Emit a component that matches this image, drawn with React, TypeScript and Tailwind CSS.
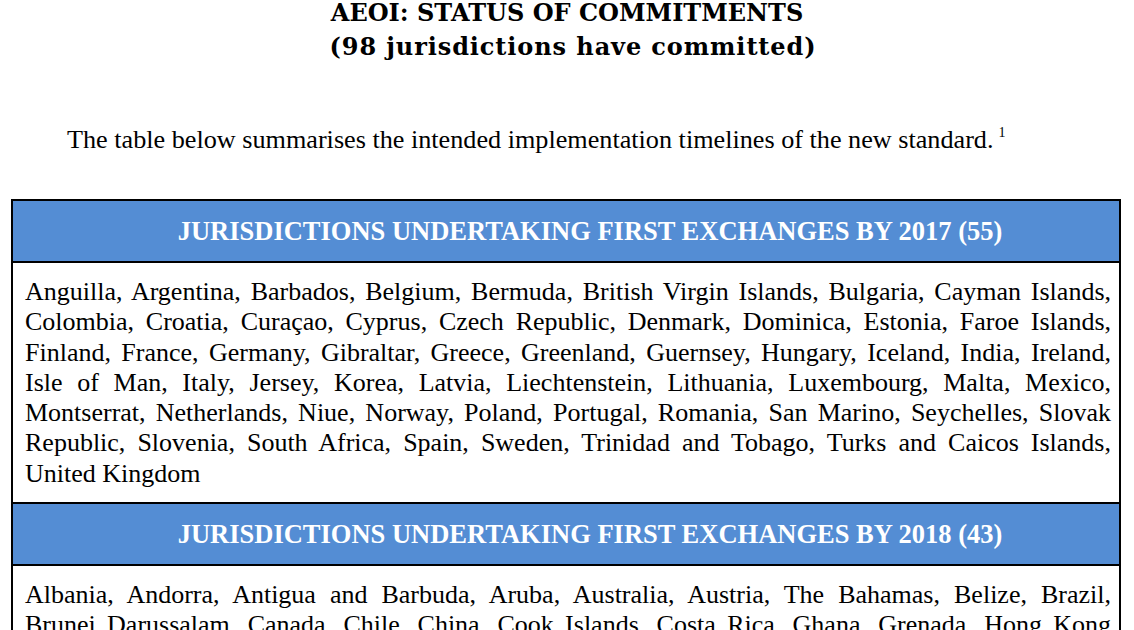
const serif = "font-['Liberation_Serif','Times_New_Roman',serif]";

const block2017 = [
  "Anguilla, Argentina, Barbados, Belgium, Bermuda, British Virgin Islands, Bulgaria, Cayman Islands,",
  "Colombia, Croatia, Curaçao, Cyprus, Czech Republic, Denmark, Dominica, Estonia, Faroe Islands,",
  "Finland, France, Germany, Gibraltar, Greece, Greenland, Guernsey, Hungary, Iceland, India, Ireland,",
  "Isle of Man, Italy, Jersey, Korea, Latvia, Liechtenstein, Lithuania, Luxembourg, Malta, Mexico,",
  "Montserrat, Netherlands, Niue, Norway, Poland, Portugal, Romania, San Marino, Seychelles, Slovak",
  "Republic, Slovenia, South Africa, Spain, Sweden, Trinidad and Tobago, Turks and Caicos Islands,",
  "United Kingdom",
];

const block2018 = [
  "Albania, Andorra, Antigua and Barbuda, Aruba, Australia, Austria, The Bahamas, Belize, Brazil,",
  "Brunei Darussalam, Canada, Chile, China, Cook Islands, Costa Rica, Ghana, Grenada, Hong Kong",
  "(China), Indonesia, Israel, Japan, Macao (China), Malaysia, Marshall Islands, Mauritius, Monaco,",
  "New Zealand, Qatar, Russia, Saint Kitts and Nevis, Saint Lucia, Saint Vincent and the Grenadines,",
  "Samoa, Saudi Arabia, Singapore, Sint Maarten, Switzerland, Turkey, United Arab Emirates, Uruguay",
];

const HeaderRow = ({ label }: { label: string }) => (
  <div className="bg-[#548dd4] h-[60px] flex items-center justify-center pl-[48px]">
    <span className={`${serif} font-bold text-white text-[26.5px] leading-none`}>{label}</span>
  </div>
);

const ListRow = ({ lines }: { lines: string[] }) => (
  <div className={`${serif} text-black text-[26px] leading-[30.3px] pl-[12px] pr-[8px] pt-[14px] pb-[13px]`}>
    {lines.map((line, i) => (
      <div
        key={i}
        className={i < lines.length - 1 ? "text-justify [text-align-last:justify]" : "text-left"}
      >
        {line}
      </div>
    ))}
  </div>
);

export default function App() {
  return (
    <div className="w-[1134px] min-h-[630px] bg-white overflow-hidden">
      <div className="text-center font-['DejaVu_Serif',serif] font-bold text-[24px] text-black">
        <div className="leading-[26px]">AEOI: STATUS OF COMMITMENTS</div>
        <div className="mt-[2px] leading-[38px] pl-[12px] tracking-[0.9px]">
          (98 jurisdictions have committed)
        </div>
      </div>

      <p className={`${serif} text-[26.2px] leading-[30px] text-black pl-[67px] mt-[59px]`}>
        The table below summarises the intended implementation timelines of the new standard.<span className="text-[14px] leading-none relative -top-[11px] ml-[5px]">1</span>
      </p>

      <div className="ml-[11px] mr-[13px] mt-[44px] border-2 border-black">
        <HeaderRow label="JURISDICTIONS UNDERTAKING FIRST EXCHANGES BY 2017 (55)" />
        <div className="border-t-2 border-black">
          <ListRow lines={block2017} />
        </div>
        <div className="border-t-2 border-black">
          <HeaderRow label="JURISDICTIONS UNDERTAKING FIRST EXCHANGES BY 2018 (43)" />
        </div>
        <div className="border-t-2 border-black">
          <ListRow lines={block2018} />
        </div>
      </div>
    </div>
  );
}
